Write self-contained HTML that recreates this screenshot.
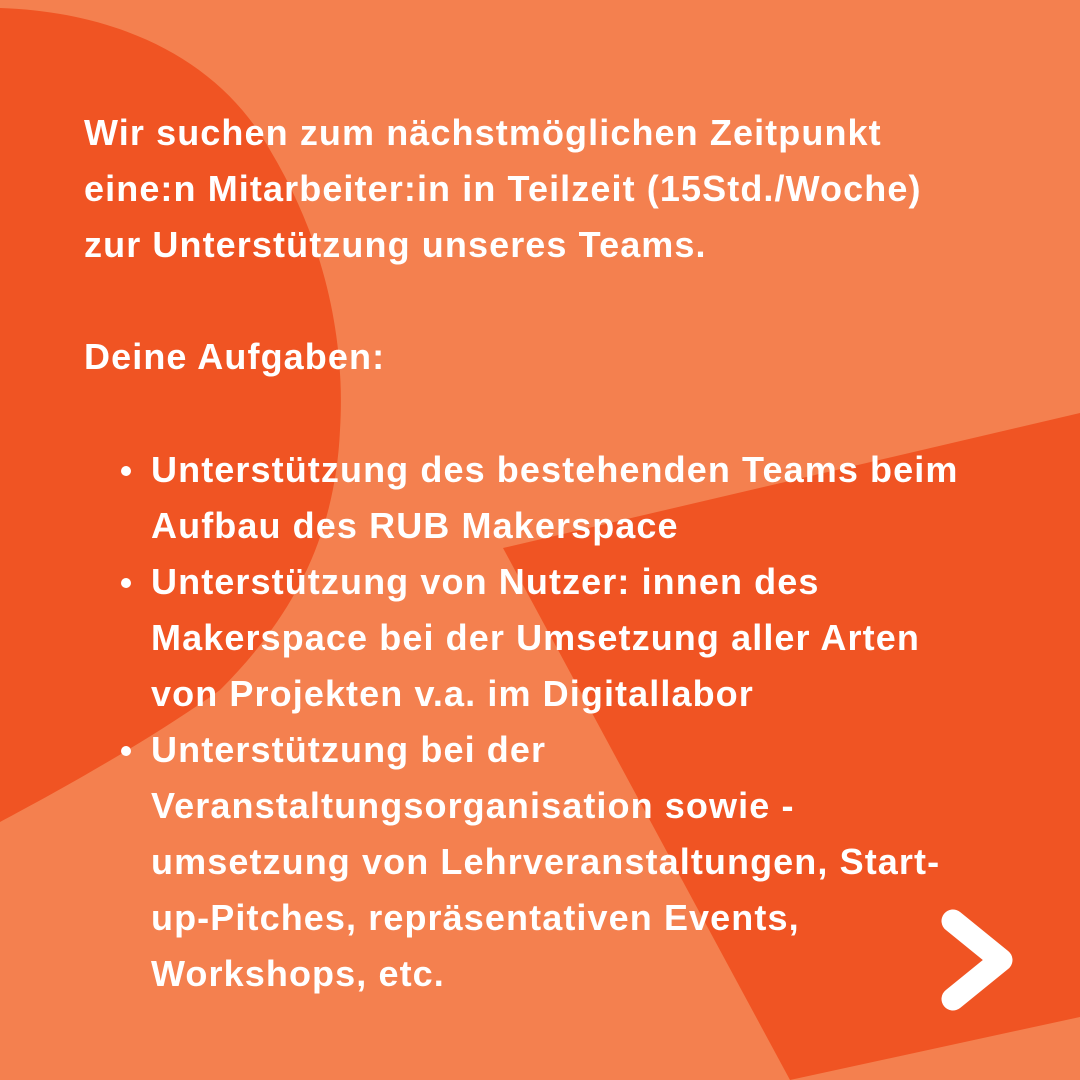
<!DOCTYPE html>
<html><head><meta charset="utf-8"><style>
html,body{margin:0;padding:0}
body{width:1080px;height:1080px;position:relative;overflow:hidden;background:#F4804F;font-family:"Liberation Sans",sans-serif;color:#fff}
svg.bg{position:absolute;left:0;top:0}
.t{position:absolute;left:84px;white-space:nowrap;font-size:36px;font-weight:bold;line-height:56px;letter-spacing:1.1px}
.b{left:151px}
.dot{position:absolute;left:121px;width:10px;height:10px;border-radius:50%;background:#fff}
</style></head><body>
<svg class="bg" width="1080" height="1080">
<path d="M0,8 C120,12 220,60 270,150 C330,250 345,350 340,430 C335,540 290,620 220,690 C150,740 60,790 0,822 Z" fill="#F05423"/>
<polygon points="1080,413 503,548 790,1080 1080,1017" fill="#F05423"/>
<polyline points="953,921 1001,960 953,999" fill="none" stroke="#fff" stroke-width="23" stroke-linecap="round" stroke-linejoin="round"/>
</svg>
<div class="t" style="top:105px">Wir suchen zum nächstmöglichen Zeitpunkt</div>
<div class="t" style="top:161px">eine:n Mitarbeiter:in in Teilzeit (15Std./Woche)</div>
<div class="t" style="top:217px">zur Unterstützung unseres Teams.</div>
<div class="t" style="top:329px">Deine Aufgaben:</div>
<div class="dot" style="top:466px"></div>
<div class="dot" style="top:578px"></div>
<div class="dot" style="top:746px"></div>
<div class="t b" style="top:442px">Unterstützung des bestehenden Teams beim</div>
<div class="t b" style="top:498px">Aufbau des RUB Makerspace</div>
<div class="t b" style="top:554px">Unterstützung von Nutzer: innen des</div>
<div class="t b" style="top:610px">Makerspace bei der Umsetzung aller Arten</div>
<div class="t b" style="top:666px">von Projekten v.a. im Digitallabor</div>
<div class="t b" style="top:722px">Unterstützung bei der</div>
<div class="t b" style="top:778px">Veranstaltungsorganisation sowie -</div>
<div class="t b" style="top:834px">umsetzung von Lehrveranstaltungen, Start-</div>
<div class="t b" style="top:890px">up-Pitches, repräsentativen Events,</div>
<div class="t b" style="top:946px">Workshops, etc.</div>
</body></html>
